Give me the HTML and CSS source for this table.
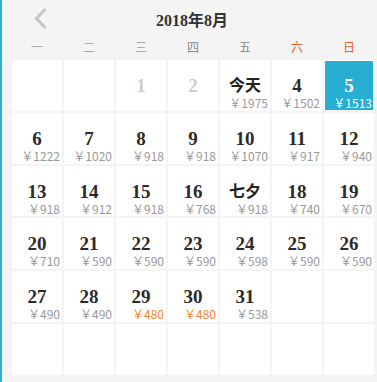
FILE: index.html
```html
<!DOCTYPE html>
<html lang="zh">
<head>
<meta charset="utf-8">
<link rel="stylesheet" href="styles.css">
</head>
<body>
<div class="cal">
  <div class="cal-head">
    <span class="prev"><svg width="15" height="23" viewBox="0 0 15 23"><polyline points="12.5,2 3.5,11.5 12.5,21" fill="none" stroke="#c6c6c6" stroke-width="3.2"/></svg></span>
    <span class="title">2018年8月</span>
  </div>
  <div class="weekdays">
    <span>一</span><span>二</span><span>三</span><span class="dark">四</span><span class="dark">五</span><span class="we">六</span><span class="we">日</span>
  </div>
  <div class="days">
    <div class="day"></div>
    <div class="day"></div>
    <div class="day past"><b>1</b></div>
    <div class="day past"><b>2</b></div>
    <div class="day"><b class="word">今天</b><i>￥1975</i></div>
    <div class="day"><b>4</b><i>￥1502</i></div>
    <div class="day on"><b>5</b><i>￥1513</i></div>

    <div class="day"><b>6</b><i>￥1222</i></div>
    <div class="day"><b>7</b><i>￥1020</i></div>
    <div class="day"><b>8</b><i>￥918</i></div>
    <div class="day"><b>9</b><i>￥918</i></div>
    <div class="day"><b>10</b><i>￥1070</i></div>
    <div class="day"><b>11</b><i>￥917</i></div>
    <div class="day"><b>12</b><i>￥940</i></div>

    <div class="day"><b>13</b><i>￥918</i></div>
    <div class="day"><b>14</b><i>￥912</i></div>
    <div class="day"><b>15</b><i>￥918</i></div>
    <div class="day"><b>16</b><i>￥768</i></div>
    <div class="day"><b class="word">七夕</b><i>￥918</i></div>
    <div class="day"><b>18</b><i>￥740</i></div>
    <div class="day"><b>19</b><i>￥670</i></div>

    <div class="day"><b>20</b><i>￥710</i></div>
    <div class="day"><b>21</b><i>￥590</i></div>
    <div class="day"><b>22</b><i>￥590</i></div>
    <div class="day"><b>23</b><i>￥590</i></div>
    <div class="day"><b>24</b><i>￥598</i></div>
    <div class="day"><b>25</b><i>￥590</i></div>
    <div class="day"><b>26</b><i>￥590</i></div>

    <div class="day"><b>27</b><i>￥490</i></div>
    <div class="day"><b>28</b><i>￥490</i></div>
    <div class="day"><b>29</b><i class="low">￥480</i></div>
    <div class="day"><b>30</b><i class="low">￥480</i></div>
    <div class="day"><b>31</b><i>￥538</i></div>
    <div class="day"></div>
    <div class="day"></div>

    <div class="day"></div>
    <div class="day"></div>
    <div class="day"></div>
    <div class="day"></div>
    <div class="day"></div>
    <div class="day"></div>
    <div class="day"></div>
  </div>
</div>
</body>
</html>
```
FILE: styles.css
```css
html, body {
  margin: 0;
  padding: 0;
  background: #f4f4f4;
}
.cal {
  width: 375px;
  height: 382px;
  border-left: 2px solid #2cb4c8;
  padding-left: 10px;
  box-sizing: border-box;
  font-family: "Noto Sans CJK SC", "Noto Sans", sans-serif;
  overflow: hidden;
}
.cal-head {
  display: grid;
  grid-template-columns: repeat(7, 50px);
  column-gap: 2px;
  height: 36px;
  align-items: center;
}
.prev {
  grid-column: 1;
  justify-self: center;
  display: flex;
  padding-left: 6px;
  padding-top: 1px;
}
.title {
  grid-column: 2 / 7;
  text-align: center;
  font-family: "Liberation Serif", "Noto Sans CJK SC", serif;
  font-weight: bold;
  font-size: 16px;
  color: #333;
  padding-top: 2px;
  padding-right: 2px;
}
.weekdays {
  display: grid;
  grid-template-columns: repeat(7, 50px);
  column-gap: 2px;
  height: 20px;
  margin-bottom: 4px;
  align-items: center;
  text-align: center;
  font-size: 12px;
  color: #aaa;
}
.weekdays .dark { color: #888; }
.weekdays .we { color: #e4602e; }
.days {
  display: grid;
  grid-template-columns: repeat(7, 50px);
  grid-auto-rows: 50.75px;
  gap: 2px;
}
.day {
  background: #fff;
  display: flex;
  flex-direction: column;
  padding-top: 16px;
  box-sizing: border-box;
}
.day b {
  display: block;
  text-align: center;
  font-family: "Liberation Serif", serif;
  font-weight: bold;
  font-size: 19px;
  line-height: 20px;
  color: #2b2b2b;
}
.day b.word {
  font-family: "Noto Sans CJK SC", sans-serif;
  font-size: 16px;
  font-weight: bold;
  line-height: 18px;
  margin-top: -1px;
  margin-bottom: 3px;
  color: #222;
}
.day i {
  display: block;
  font-style: normal;
  text-align: right;
  padding-right: 2px;
  font-size: 12px;
  line-height: 14px;
  color: #999;
  white-space: nowrap;
}
.day i.low { color: #ee8733; }
.day.past b { color: #ccc; }
.day.on {
  background: #28add3;
  border: 1px solid #fff;
  padding-top: 15px;
}
.day.on b, .day.on i { color: #fff; }
.day.on i { padding-right: 1px; }
```
